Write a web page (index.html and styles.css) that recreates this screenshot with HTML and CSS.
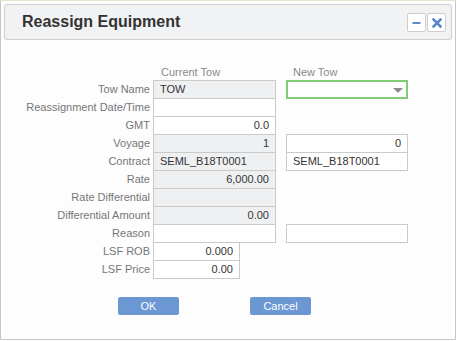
FILE: index.html
```html
<!DOCTYPE html>
<html>
<head>
<meta charset="utf-8">
<link rel="stylesheet" href="styles.css">
</head>
<body>
<div class="dialog">
  <div class="header">
    <h1 class="title">Reassign Equipment</h1>
    <div class="tools">
      <button class="tool" aria-label="Minimize"><svg width="9" height="9" viewBox="0 0 9 9"><rect x="0.5" y="4" width="8" height="2" fill="#5b87c6"/></svg></button>
      <button class="tool" aria-label="Close"><svg width="10" height="10" viewBox="0 0 10 10"><path d="M1.5 1.5 L8.5 8.5 M8.5 1.5 L1.5 8.5" stroke="#5b87c6" stroke-width="2.6" stroke-linecap="square"/></svg></button>
    </div>
  </div>

  <div class="form">
    <div></div>
    <div class="colhead cur">Current Tow</div>
    <div class="colhead new">New Tow</div>

    <div class="label">Tow Name</div>
    <div class="cell ro">TOW</div>
    <div class="select"><span class="arrow"></span></div>

    <div class="label">Reassignment Date/Time</div>
    <div class="cell"></div>
    <div></div>

    <div class="label">GMT</div>
    <div class="cell num">0.0</div>
    <div></div>

    <div class="label">Voyage</div>
    <div class="cell ro num">1</div>
    <div class="cell newcell num">0</div>

    <div class="label">Contract</div>
    <div class="cell ro">SEML_B18T0001</div>
    <div class="cell newcell">SEML_B18T0001</div>

    <div class="label">Rate</div>
    <div class="cell ro num">6,000.00</div>
    <div></div>

    <div class="label">Rate Differential</div>
    <div class="cell ro"></div>
    <div></div>

    <div class="label">Differential Amount</div>
    <div class="cell ro num">0.00</div>
    <div></div>

    <div class="label">Reason</div>
    <div class="cell"></div>
    <div class="cell newcell"></div>

    <div class="label">LSF ROB</div>
    <div class="cell short num">0.000</div>
    <div></div>

    <div class="label">LSF Price</div>
    <div class="cell short num">0.00</div>
    <div></div>
  </div>

  <div class="actions">
    <button class="btn">OK</button>
    <button class="btn">Cancel</button>
  </div>
</div>
</body>
</html>
```

FILE: styles.css
```css
html, body {
  margin: 0;
  padding: 0;
  background: #ffffff;
}

body {
  font-family: "Liberation Sans", Arial, sans-serif;
}

.dialog {
  box-sizing: border-box;
  width: 456px;
  height: 340px;
  border: 1px solid #c6c6c6;
  border-top-color: #e0e4c8;
  background: #fdfdfd;
  padding: 3px 3px 0 3px;
}

.header {
  box-sizing: border-box;
  height: 36px;
  border: 1px solid #cdcdcd;
  border-radius: 3px;
  background: #f1f2f3;
  display: flex;
  align-items: center;
  justify-content: space-between;
  padding: 0 5px 0 17px;
}

.title {
  margin: 0;
  font-size: 16px;
  font-weight: bold;
  color: #333333;
}

.tools {
  display: flex;
  gap: 1px;
  padding-top: 1px;
}

.tool {
  box-sizing: border-box;
  width: 19px;
  height: 19px;
  padding: 0;
  border: 1px solid #cdcdcd;
  border-radius: 2px;
  background: #ffffff;
  display: flex;
  align-items: center;
  justify-content: center;
}

.form {
  display: grid;
  grid-template-columns: 152px 133px 122px;
  grid-auto-rows: 18px;
  margin-top: 22px;
  margin-left: -3px;
  font-size: 11px;
}

.colhead {
  line-height: 18px;
  color: #8a8a8a;
  align-self: start;
  margin-top: 1px;
}

.colhead.cur {
  padding-left: 8px;
}

.colhead.new {
  padding-left: 7px;
}

.label {
  text-align: right;
  padding-right: 3px;
  line-height: 18px;
  color: #767676;
  white-space: nowrap;
}

.cell {
  box-sizing: border-box;
  width: 123px;
  height: 19px;
  border: 1px solid #cacaca;
  background: #ffffff;
  color: #333333;
  line-height: 17px;
  padding: 0 6px;
  white-space: nowrap;
}

.cell.ro {
  background: #eff0f2;
}

.cell.num {
  text-align: right;
}

.cell.short {
  width: 87px;
}

.cell.newcell {
  width: 122px;
}

.select {
  box-sizing: border-box;
  width: 122px;
  height: 19px;
  border: 2px solid #7fcd77;
  background: #ffffff;
  position: relative;
}

.arrow {
  position: absolute;
  right: 3px;
  top: 6px;
  width: 0;
  height: 0;
  border-left: 5px solid transparent;
  border-right: 5px solid transparent;
  border-top: 5px solid #8c8c8c;
}

.actions {
  display: flex;
  gap: 71px;
  margin-top: 19px;
  padding-left: 114px;
}

.btn {
  box-sizing: border-box;
  width: 61px;
  height: 18px;
  padding: 0;
  border: none;
  border-radius: 2px;
  background: #6b98d2;
  color: #ffffff;
  font-family: "Liberation Sans", Arial, sans-serif;
  font-size: 11px;
  line-height: 18px;
  text-align: center;
}
```
